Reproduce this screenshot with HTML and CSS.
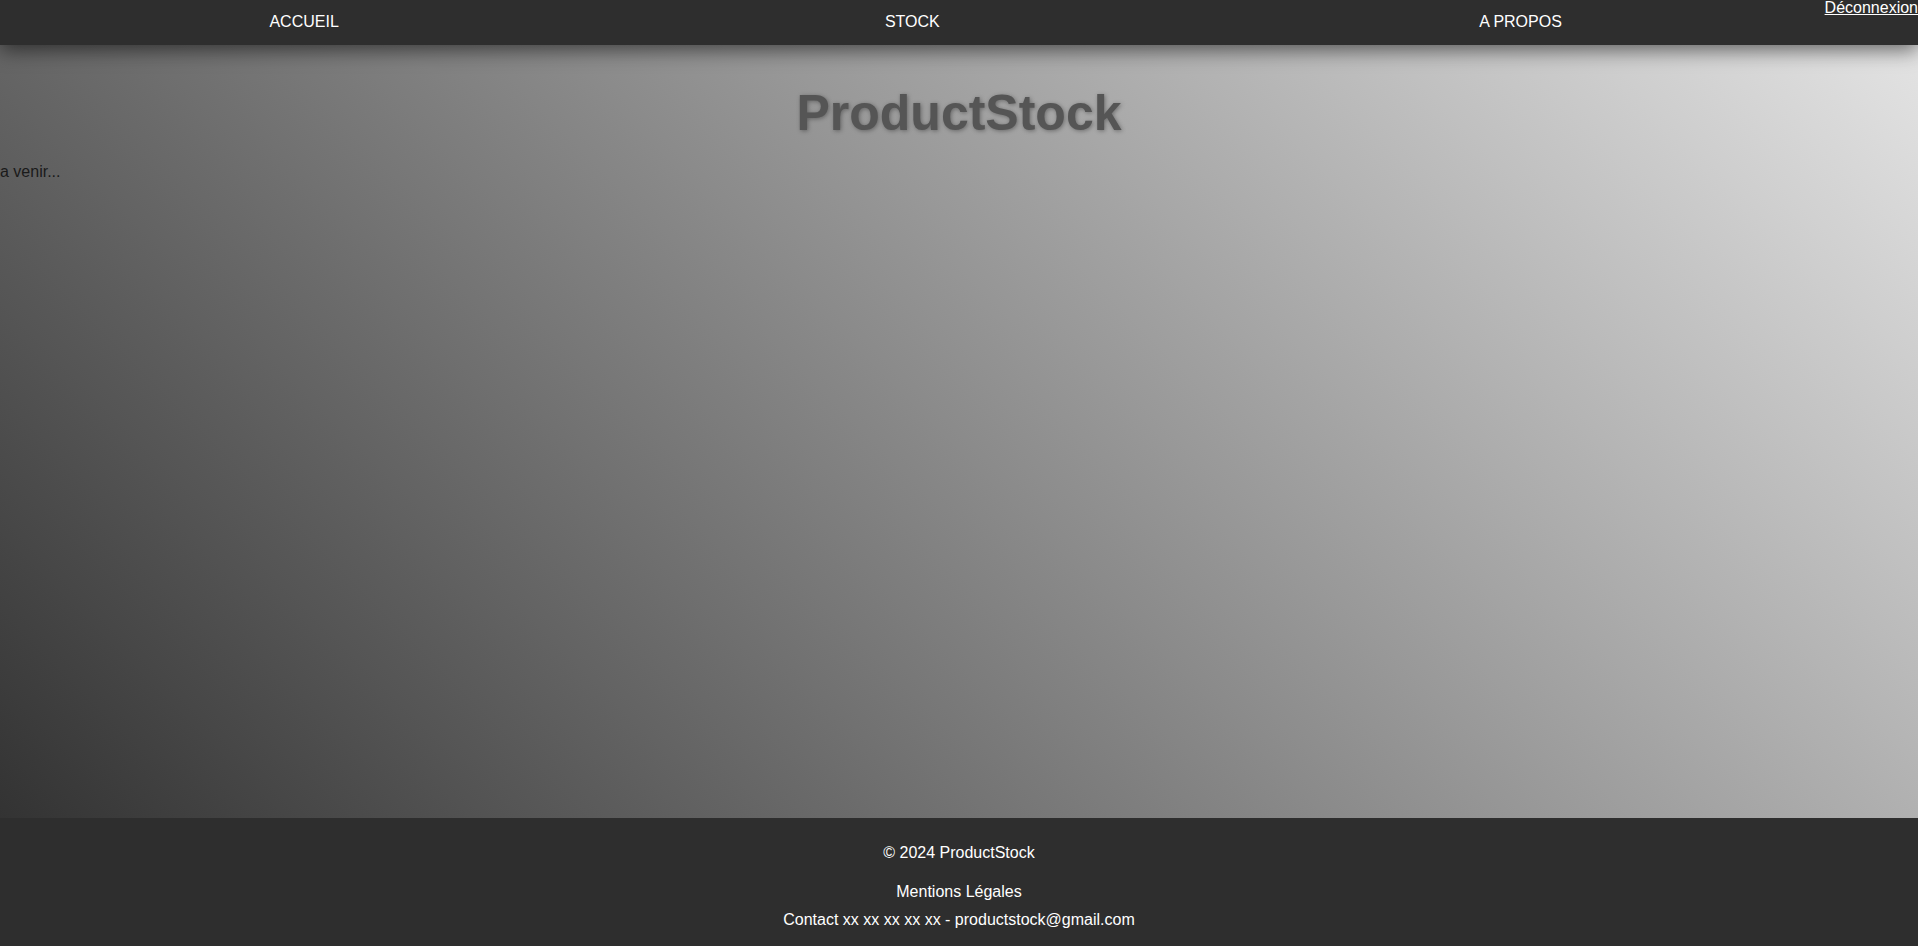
FILE: index.html
```html
<!DOCTYPE html>
<html lang="fr">
<head>
<meta charset="utf-8">
<title>ProductStock</title>
<link rel="stylesheet" href="styles.css">
</head>
<body>
<header class="topbar">
  <nav class="menu">
    <a class="menu-item" href="#">ACCUEIL</a>
    <a class="menu-item" href="#">STOCK</a>
    <a class="menu-item" href="#">A PROPOS</a>
  </nav>
  <a class="logout" href="#">Déconnexion</a>
</header>
<main class="content">
  <h1 class="title">ProductStock</h1>
  <p class="soon">a venir...</p>
</main>
<footer class="footer">
  <p class="copy">© 2024 ProductStock</p>
  <p class="legal">Mentions Légales</p>
  <p class="contact">Contact xx xx xx xx xx - productstock@gmail.com</p>
</footer>
</body>
</html>
```

FILE: styles.css
```css
html, body {
  margin: 0;
  padding: 0;
}
body {
  height: 100vh;
  display: flex;
  flex-direction: column;
  font-family: "Liberation Sans", Arial, sans-serif;
  font-size: 16px;
}
.topbar {
  height: 45px;
  flex: 0 0 45px;
  display: flex;
  background: #2e2e2e;
  box-shadow: 0 5px 20px rgba(0, 0, 0, 0.55);
  position: relative;
  z-index: 1;
}
.menu {
  flex: 1;
  display: flex;
  align-items: center;
  padding-bottom: 2px;
}
.menu-item {
  flex: 1;
  text-align: center;
  color: #fff;
  text-decoration: none;
  line-height: 18px;
}
.logout {
  align-self: flex-start;
  color: #fff;
  line-height: 15px;
  text-decoration: underline;
}
.content {
  flex: 1;
  background: linear-gradient(45deg, #333333, #e3e3e3);
}
.title {
  margin: 40px 0 20px;
  font-size: 50px;
  font-weight: bold;
  line-height: 57.5px;
  text-align: center;
  color: #555;
  text-shadow: 1px 1px 4px rgba(0, 0, 0, 0.35);
}
.soon {
  margin: 0;
  color: #1a1a1a;
  line-height: 18px;
}
.footer {
  flex: 0 0 128px;
  height: 128px;
  box-sizing: border-box;
  padding-top: 26px;
  background: #2e2e2e;
  color: #fff;
  text-align: center;
}
.footer p {
  margin: 0;
  line-height: 18px;
}
.footer .copy {
  margin-bottom: 21px;
}
.footer .legal {
  margin-bottom: 10px;
}
```
